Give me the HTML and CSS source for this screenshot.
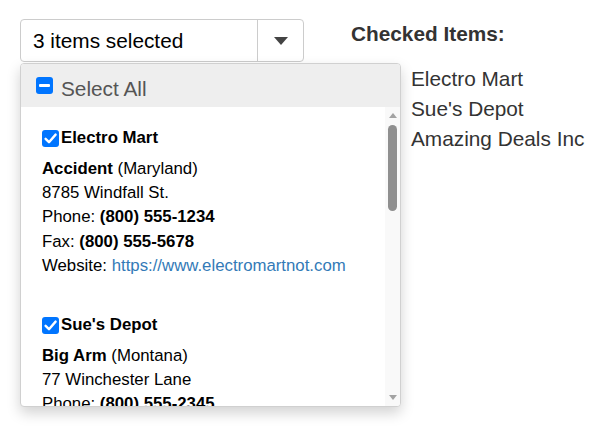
FILE: index.html
```html
<!DOCTYPE html>
<html lang="en">
<head>
<meta charset="utf-8">
<title>Multi select</title>
<link rel="stylesheet" href="styles.css">
</head>
<body>
<div class="picker">
  <div class="toggle">
    <span class="toggle-text">3 items selected</span>
    <span class="toggle-arrow"><span class="caret"></span></span>
  </div>
  <div class="menu">
    <div class="menu-head">
      <span class="box"><span class="dash"></span></span>
      <span class="head-text">Select All</span>
    </div>
    <div class="menu-body">
      <div class="menu-list">
        <div class="item">
          <div class="item-title">
            <span class="box small"><svg viewBox="0 0 17 17" width="17" height="17"><path d="M3.6 8.8 L7 12.2 L13.6 4.6" fill="none" stroke="#fff" stroke-width="2.4" stroke-linecap="round" stroke-linejoin="round"/></svg></span>
            <span>Electro Mart</span>
          </div>
          <div class="line"><b>Accident</b> (Maryland)</div>
          <div class="line">8785 Windfall St.</div>
          <div class="line">Phone: <b>(800) 555-1234</b></div>
          <div class="line">Fax: <b>(800) 555-5678</b></div>
          <div class="line">Website: <a class="link" href="#">https://www.electromartnot.com</a></div>
        </div>
        <div class="item">
          <div class="item-title">
            <span class="box small"><svg viewBox="0 0 17 17" width="17" height="17"><path d="M3.6 8.8 L7 12.2 L13.6 4.6" fill="none" stroke="#fff" stroke-width="2.4" stroke-linecap="round" stroke-linejoin="round"/></svg></span>
            <span>Sue's Depot</span>
          </div>
          <div class="line"><b>Big Arm</b> (Montana)</div>
          <div class="line">77 Winchester Lane</div>
          <div class="line">Phone: <b>(800) 555-2345</b></div>
        </div>
      </div>
      <div class="scrollbar">
        <div class="sb-btn"><span class="sb-up"></span></div>
        <div class="sb-track"><div class="sb-thumb"></div></div>
        <div class="sb-btn"><span class="sb-down"></span></div>
      </div>
    </div>
  </div>
</div>
<div class="checked">
  <h3 class="checked-title">Checked Items:</h3>
  <ul class="checked-list">
    <li>Electro Mart</li>
    <li>Sue's Depot</li>
    <li>Amazing Deals Inc</li>
  </ul>
</div>
</body>
</html>
```
FILE: styles.css
```css
html, body {
  margin: 0;
  background: #fff;
}
body {
  box-sizing: border-box;
  min-height: 440px;
  padding: 19px 20px;
  display: flex;
  align-items: flex-start;
  gap: 47px;
  font-family: "Liberation Sans", Arial, sans-serif;
  color: #000;
}
.picker {
  position: relative;
  width: 284px;
  flex: none;
}
.toggle {
  box-sizing: border-box;
  height: 43px;
  display: flex;
  border: 1px solid #ccc;
  border-radius: 4px;
  background: #fff;
}
.toggle-text {
  flex: 1;
  padding-left: 12px;
  font-size: 20.8px;
  line-height: 41px;
  white-space: nowrap;
}
.toggle-arrow {
  width: 45px;
  border-left: 1px solid #ccc;
  display: flex;
  align-items: center;
  justify-content: center;
}
.caret {
  width: 0;
  height: 0;
  border-left: 7px solid transparent;
  border-right: 7px solid transparent;
  border-top: 8px solid #444;
  margin-top: 1px;
}
.menu {
  position: absolute;
  top: 44px;
  left: 0;
  width: 381px;
  height: 344px;
  box-sizing: border-box;
  border: 1px solid #d0d0d0;
  border-radius: 4px;
  background: #fff;
  box-shadow: 0 6px 14px rgba(0, 0, 0, 0.18);
  overflow: hidden;
  display: flex;
  flex-direction: column;
}
.menu-head {
  height: 43px;
  flex: none;
  background: #eee;
  display: flex;
  align-items: center;
  padding-left: 15px;
  gap: 8px;
}
.head-text {
  font-size: 20.8px;
  line-height: 24px;
  color: #555;
  margin-top: 7px;
}
.box {
  width: 17px;
  height: 17px;
  border-radius: 3px;
  background: #0075ff;
  display: flex;
  align-items: center;
  justify-content: center;
  flex: none;
}
.box svg {
  display: block;
}
.dash {
  width: 11px;
  height: 3px;
  background: #fff;
  border-radius: 1px;
}
.menu-body {
  flex: 1;
  display: flex;
  overflow: hidden;
}
.menu-list {
  flex: 1;
  padding: 19px 0 0 21px;
  font-size: 16.8px;
  line-height: 24.2px;
  overflow: hidden;
}
.item {
  margin-bottom: 35px;
}
.item-title {
  display: flex;
  align-items: center;
  gap: 2px;
  height: 24px;
  font-weight: bold;
  margin-bottom: 7px;
}
.line {
  white-space: nowrap;
}
.link {
  color: #337ab7;
  text-decoration: none;
}
.scrollbar {
  width: 15px;
  flex: none;
  background: #f9f9f9;
  display: flex;
  flex-direction: column;
}
.sb-btn {
  height: 17px;
  display: flex;
  align-items: center;
  justify-content: center;
  flex: none;
}
.sb-up {
  width: 0;
  height: 0;
  border-left: 4px solid transparent;
  border-right: 4px solid transparent;
  border-bottom: 5px solid #a3a3a3;
}
.sb-down {
  width: 0;
  height: 0;
  border-left: 4px solid transparent;
  border-right: 4px solid transparent;
  border-top: 5px solid #a3a3a3;
}
.sb-track {
  flex: 1;
  display: flex;
  justify-content: center;
}
.sb-thumb {
  width: 9px;
  height: 86px;
  margin-top: 1px;
  border-radius: 4.5px;
  background: #8f8f8f;
}
.checked {
  padding-top: 3px;
}
.checked-title {
  margin: 0;
  font-size: 20.8px;
  line-height: 24px;
  font-weight: bold;
  color: #333;
}
.checked-list {
  list-style: none;
  margin: 18px 0 0;
  padding-left: 60px;
  font-size: 20.8px;
  line-height: 30px;
  color: #333;
}
```
